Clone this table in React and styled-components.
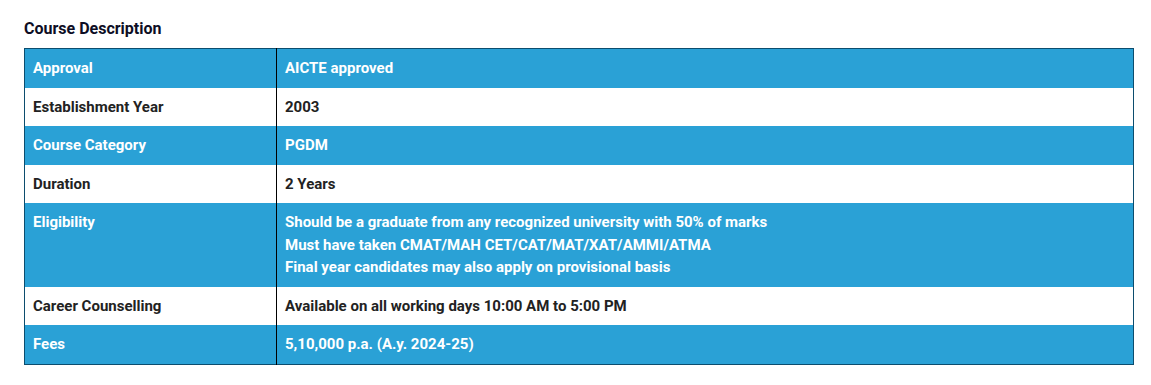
import React from 'react'
import styled, { createGlobalStyle } from 'styled-components'

const GlobalStyle = createGlobalStyle`
  body {
    margin: 0;
    background: #fff;
    font-family: Roboto, "Liberation Sans", Arial, sans-serif;
  }
`

const Section = styled.section`
  padding: 19px 17px 0 24px;
`

const Title = styled.h3`
  margin: 0 0 10px;
  font-size: 16px;
  line-height: 19px;
  font-weight: 700;
  color: #0d0d24;
`

const Table = styled.table`
  width: 1110px;
  border-collapse: collapse;
  border: 1px solid #0c4d6e;
`

const Row = styled.tr`
  background: ${({ shaded }) => (shaded ? '#2aa1d6' : '#fff')};
  color: ${({ shaded }) => (shaded ? '#fff' : '#222')};
`

const Cell = styled.td`
  padding: 8px;
  font-size: 15px;
  line-height: 22.5px;
  font-weight: 700;
  vertical-align: top;
  width: ${({ narrow }) => (narrow ? '235px' : 'auto')};
  border-right: ${({ narrow }) => (narrow ? '1px solid #000' : 'none')};
`

const Line = styled.div``

const rows = [
  ['Approval', ['AICTE approved']],
  ['Establishment Year', ['2003']],
  ['Course Category', ['PGDM']],
  ['Duration', ['2 Years']],
  ['Eligibility', [
    'Should be a graduate from any recognized university with 50% of marks',
    'Must have taken CMAT/MAH CET/CAT/MAT/XAT/AMMI/ATMA',
    'Final year candidates may also apply on provisional basis'
  ]],
  ['Career Counselling', ['Available on all working days 10:00 AM to 5:00 PM']],
  ['Fees', ['5,10,000 p.a. (A.y. 2024-25)']]
]

export default function App() {
  return (
    <>
      <GlobalStyle />
      <Section>
        <Title>Course Description</Title>
        <Table>
          <tbody>
            {rows.map(([label, lines], i) => (
              <Row key={label} shaded={i % 2 === 0}>
                <Cell narrow>{label}</Cell>
                <Cell>
                  {lines.map(l => <Line key={l}>{l}</Line>)}
                </Cell>
              </Row>
            ))}
          </tbody>
        </Table>
      </Section>
    </>
  )
}
